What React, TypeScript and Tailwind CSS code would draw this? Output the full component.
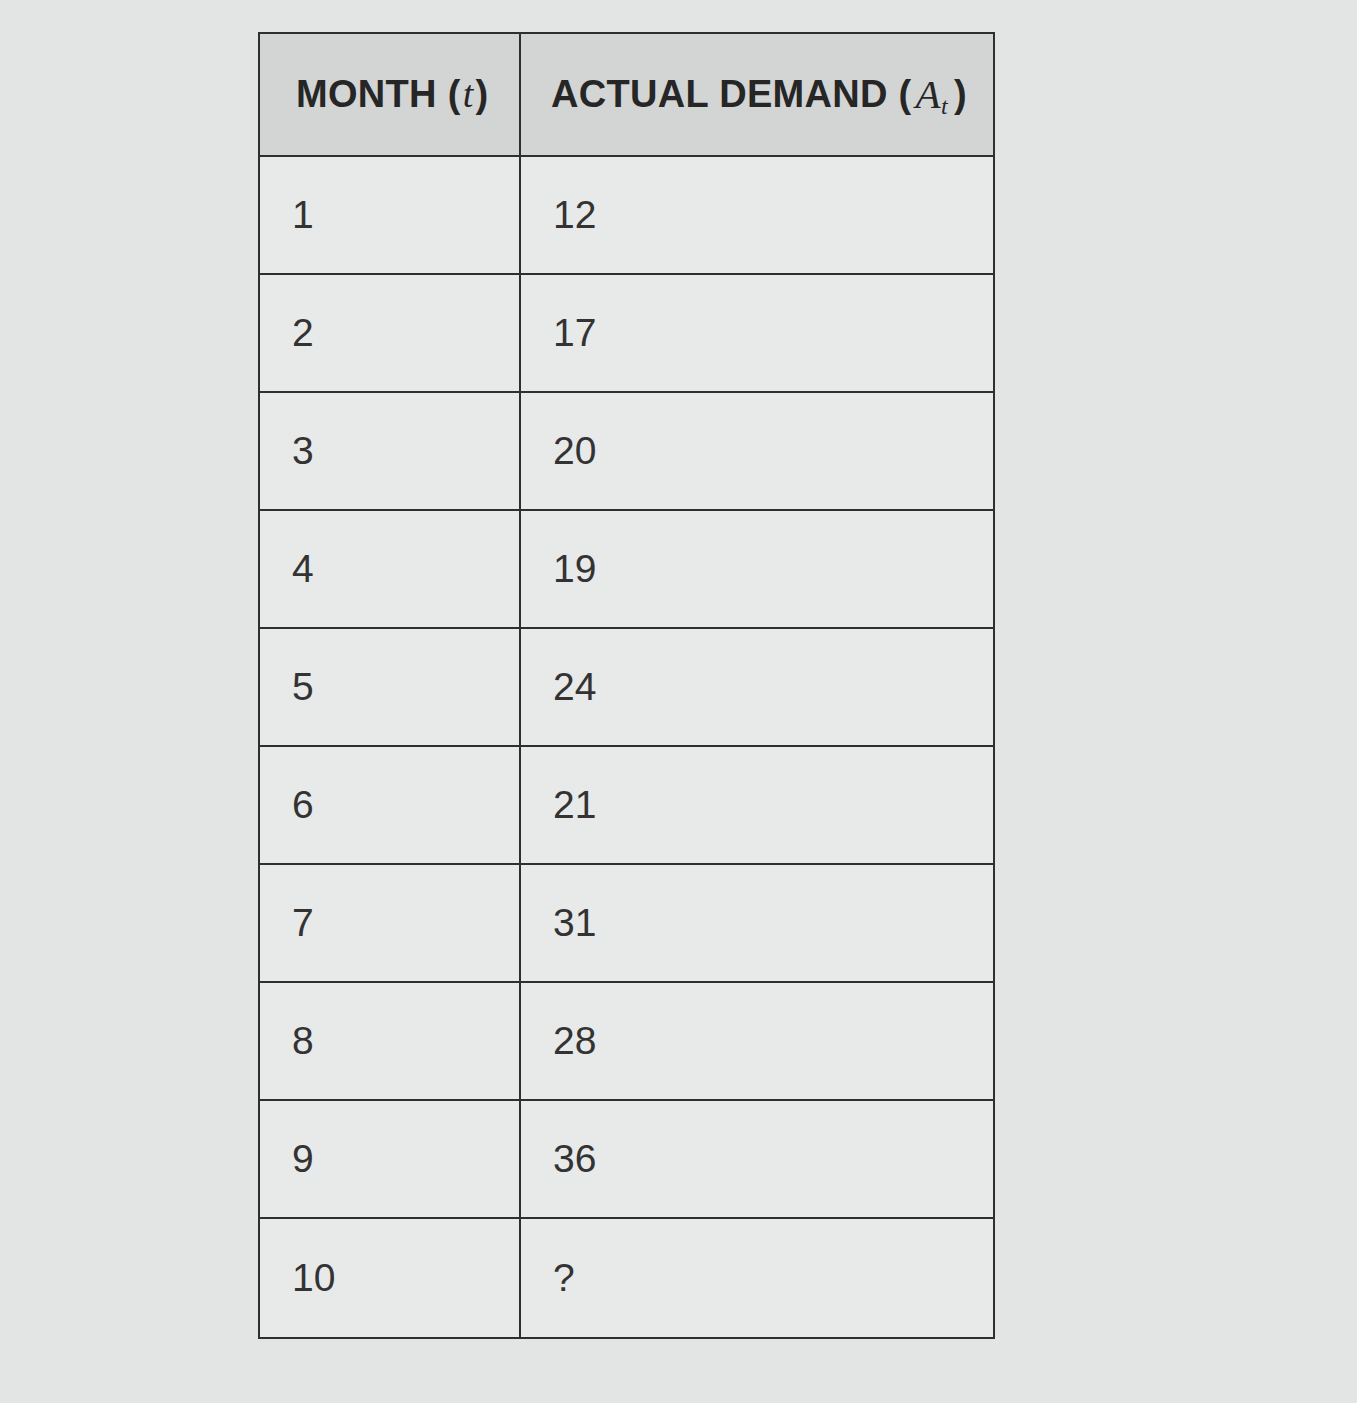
import React from 'react'

const rows: [string, string][] = [
  ['1', '12'],
  ['2', '17'],
  ['3', '20'],
  ['4', '19'],
  ['5', '24'],
  ['6', '21'],
  ['7', '31'],
  ['8', '28'],
  ['9', '36'],
  ['10', '?'],
]

export default function App() {
  return (
    <div
      className="min-h-[1403px] w-[1357px] bg-[#e3e5e5] pt-[32px] pl-[258px]"
      style={{ fontFamily: '"Liberation Sans", Arial, sans-serif' }}
    >
      <div className="w-[737px] border-2 border-[#2f2f2f] bg-[#e8e9e9]">
        {/* header */}
        <div className="grid h-[123px] grid-cols-[261px_1fr] border-b-2 border-[#2f2f2f] bg-[#d3d4d4]">
          <div className="flex items-center border-r-2 border-[#2f2f2f] pl-[36px] text-[38px] font-bold tracking-[0.3px] text-[#262626]">
            MONTH (<span className="font-['Liberation_Serif'] italic font-normal px-[2px]">t</span>)
          </div>
          <div className="flex items-center pl-[30px] text-[38px] font-bold tracking-[0.3px] text-[#262626]">
            ACTUAL DEMAND (
            <span className="font-['Liberation_Serif'] italic font-normal text-[41px] pl-[4px] pr-[6px]">
              A<sub className="text-[24px]">t</sub>
            </span>
            )
          </div>
        </div>
        {rows.map(([m, d], i) => (
          <div
            key={m}
            className={
              'grid h-[118px] grid-cols-[261px_1fr] text-[39px] text-[#333333] ' +
              (i < rows.length - 1 ? 'border-b-2 border-[#2f2f2f]' : '')
            }
          >
            <div className="flex items-center border-r-2 border-[#2f2f2f] pl-[32px]">{m}</div>
            <div className="flex items-center pl-[32px]">{d}</div>
          </div>
        ))}
      </div>
    </div>
  )
}
